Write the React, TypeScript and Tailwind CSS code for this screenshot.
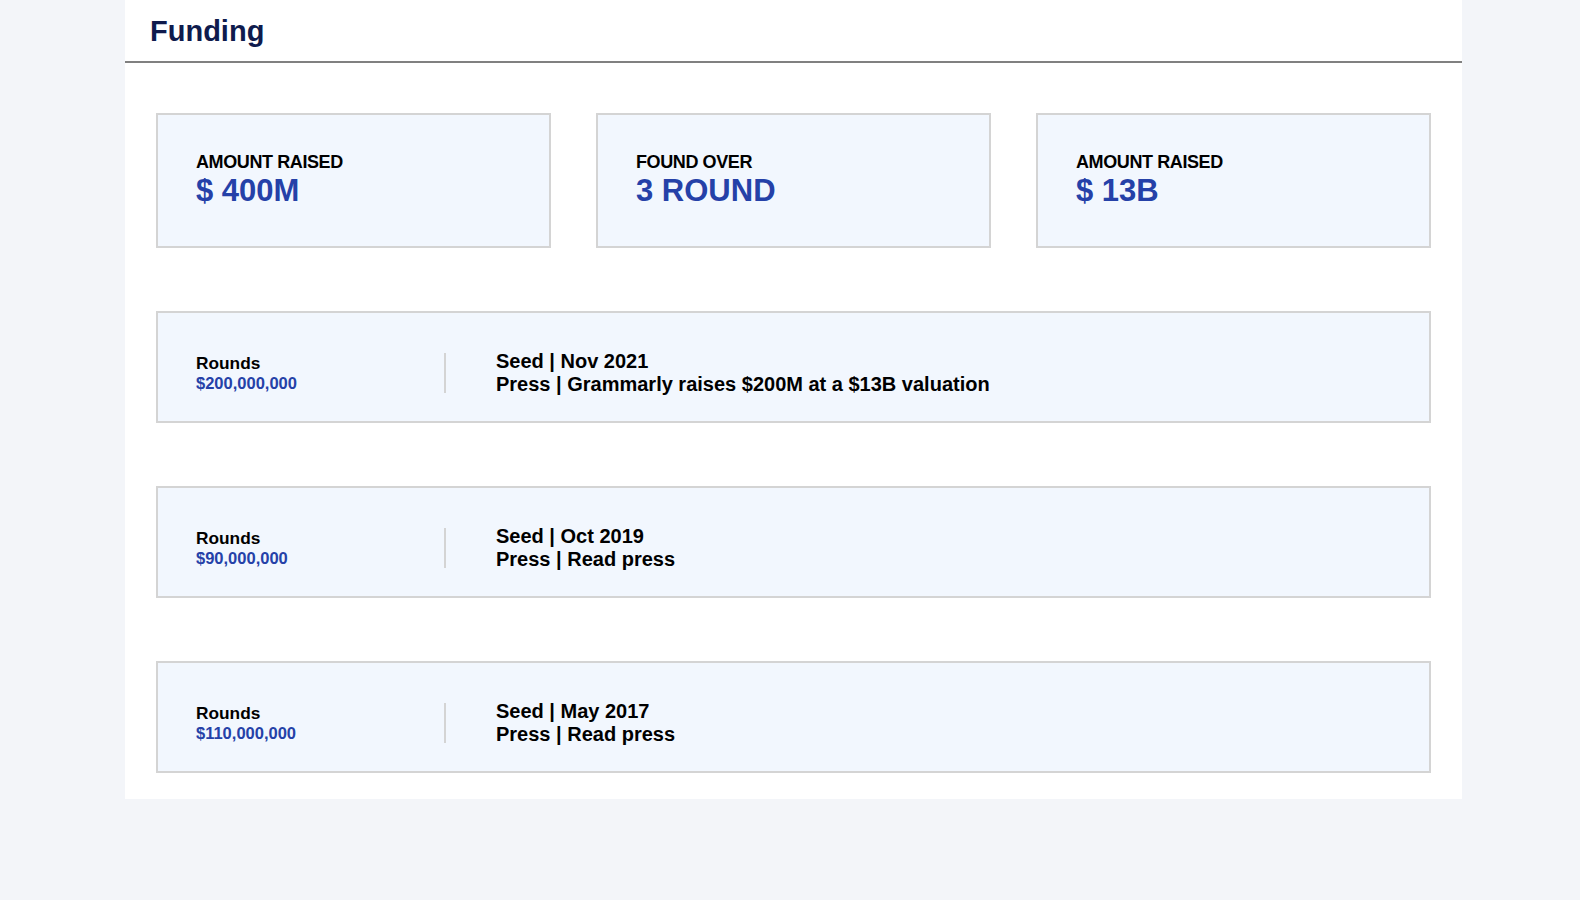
import React from "react";

const stats = [
  { label: "AMOUNT RAISED", value: "$ 400M" },
  { label: "FOUND OVER", value: "3 ROUND" },
  { label: "AMOUNT RAISED", value: "$ 13B" },
];

const rounds = [
  { amount: "$200,000,000", date: "Seed | Nov 2021", press: "Press | Grammarly raises $200M at a $13B valuation" },
  { amount: "$90,000,000", date: "Seed | Oct 2019", press: "Press | Read press" },
  { amount: "$110,000,000", date: "Seed | May 2017", press: "Press | Read press" },
];

export default function App() {
  return (
    <div
      className="min-h-[900px] w-full bg-[#f3f5f9]"
      style={{ fontFamily: '"Liberation Sans", Arial, sans-serif' }}
    >
      <div className="ml-[125px] w-[1337px] bg-white pb-[26px]">
        <div className="flex h-[63px] items-start border-b-2 border-[#808080] pl-[25px]">
          <h1 className="mt-[14px] text-[29px] font-bold leading-[34px] text-[#0f1b4d]">Funding</h1>
        </div>
        <div className="px-[31px] pt-[50px]">
          <div className="grid grid-cols-3 gap-[45px]">
            {stats.map((s, i) => (
              <div
                key={i}
                className="flex h-[135px] flex-col justify-center border-2 border-[#d4d4d4] bg-[#f2f7fe] pl-[38px]"
              >
                <div className="text-[18px] font-bold leading-[21px] tracking-[-0.4px] text-black">{s.label}</div>
                <div className="text-[31px] font-bold leading-[36px] text-[#2541a8]">{s.value}</div>
              </div>
            ))}
          </div>
          <div className="mt-[63px] flex flex-col gap-[63px]">
            {rounds.map((r, i) => (
              <div
                key={i}
                className="flex h-[112px] items-center border-2 border-[#d4d4d4] bg-[#f2f7fe] pl-[38px] pt-[11px]"
              >
                <div className="w-[248px]">
                  <div className="text-[17.3px] font-bold leading-[20px] text-black">Rounds</div>
                  <div className="text-[16.5px] font-bold leading-[20px] text-[#2541a8]">{r.amount}</div>
                </div>
                <div className="h-[40px] w-[2px] bg-[#d4d4d4]" />
                <div className="ml-[50px] text-[20px] font-bold leading-[23px] text-black">
                  <div>{r.date}</div>
                  <div>{r.press}</div>
                </div>
              </div>
            ))}
          </div>
        </div>
      </div>
    </div>
  );
}
